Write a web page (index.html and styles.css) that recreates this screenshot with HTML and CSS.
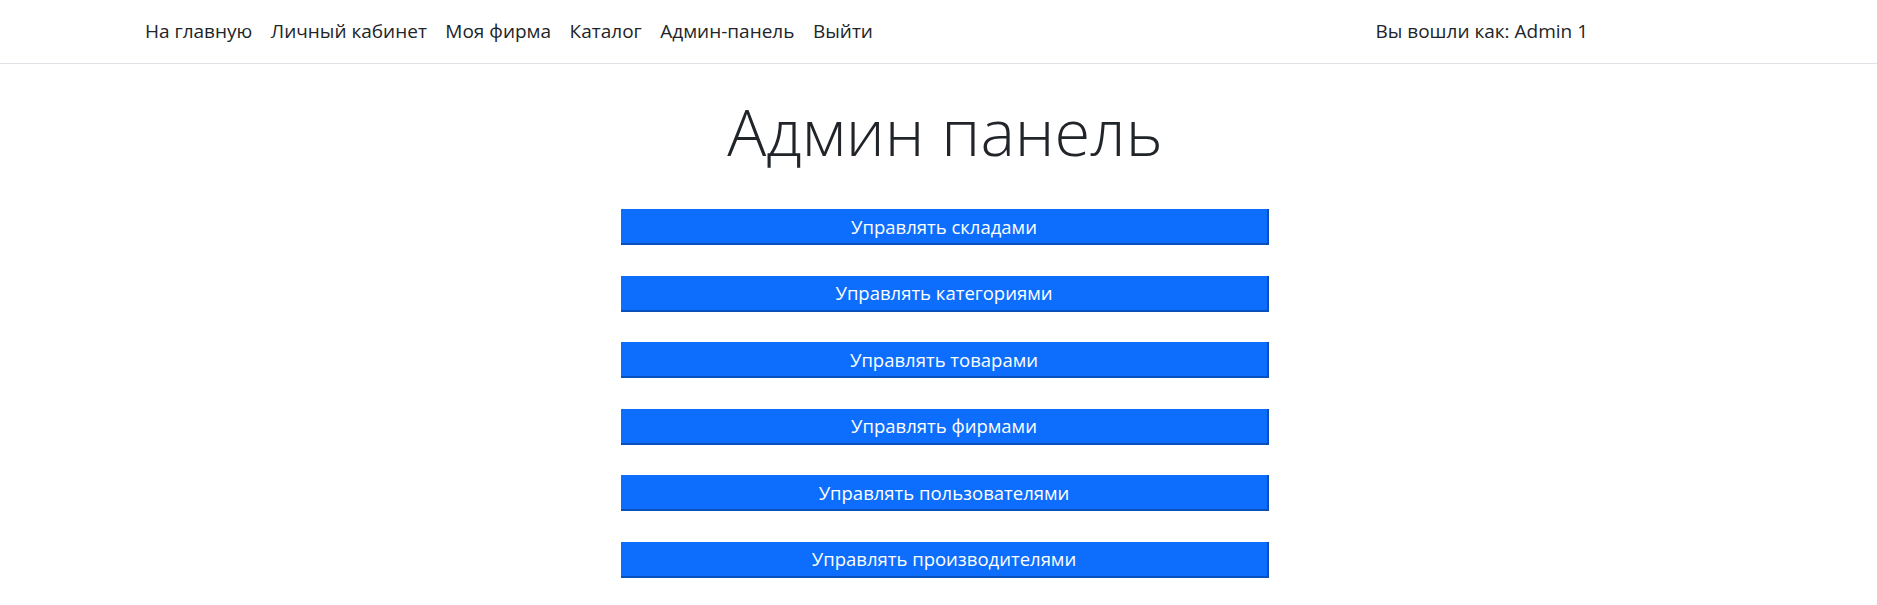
FILE: index.html
```html
<!DOCTYPE html>
<html lang="ru">
<head>
<meta charset="utf-8">
<title>Админ панель</title>
<link rel="stylesheet" href="styles.css">
</head>
<body>
<header class="navbar">
  <nav class="nav-left">
    <a class="nav-link" href="#">На главную</a>
    <a class="nav-link" href="#">Личный кабинет</a>
    <a class="nav-link" href="#">Моя фирма</a>
    <a class="nav-link" href="#">Каталог</a>
    <a class="nav-link" href="#">Админ-панель</a>
    <a class="nav-link" href="#">Выйти</a>
  </nav>
  <div class="nav-user">Вы вошли как: Admin 1</div>
</header>
<main class="main">
  <h1 class="title">Админ панель</h1>
  <div class="actions">
    <button class="btn">Управлять складами</button>
    <button class="btn">Управлять категориями</button>
    <button class="btn">Управлять товарами</button>
    <button class="btn">Управлять фирмами</button>
    <button class="btn">Управлять пользователями</button>
    <button class="btn">Управлять производителями</button>
  </div>
</main>
</body>
</html>
```
FILE: styles.css
```css
* { box-sizing: border-box; }
html, body { margin: 0; padding: 0; background: #fff; }
body {
  font-family: "Open Sans", "Noto Sans", sans-serif;
  color: #212529;
}
.navbar {
  height: 64px;
  border-bottom: 1px solid #dee2e6;
  display: flex;
  align-items: center;
  justify-content: space-between;
  padding: 0 289px 0 145px;
}
.nav-left {
  display: flex;
  gap: 18.5px;
}
.nav-link {
  color: #212529;
  text-decoration: none;
  font-size: 19px;
  line-height: 1.5;
}
.nav-user {
  font-size: 19px;
  line-height: 1.5;
}
.main {
  display: flex;
  flex-direction: column;
  align-items: center;
  padding-left: 13px;
}
.title {
  font-weight: 300;
  font-size: 65px;
  line-height: 1.2;
  margin: 28px 0 39px;
}
.actions {
  display: flex;
  flex-direction: column;
  gap: 30.6px;
  width: 648px;
}
.btn {
  height: 36px;
  background: #0d6efd;
  color: #fff;
  border: none;
  border-right: 2px solid #0a50bd;
  border-bottom: 2px solid #0a50bd;
  font-family: "Open Sans", "Noto Sans", sans-serif;
  font-size: 18.5px;
  padding: 0;
}
```
